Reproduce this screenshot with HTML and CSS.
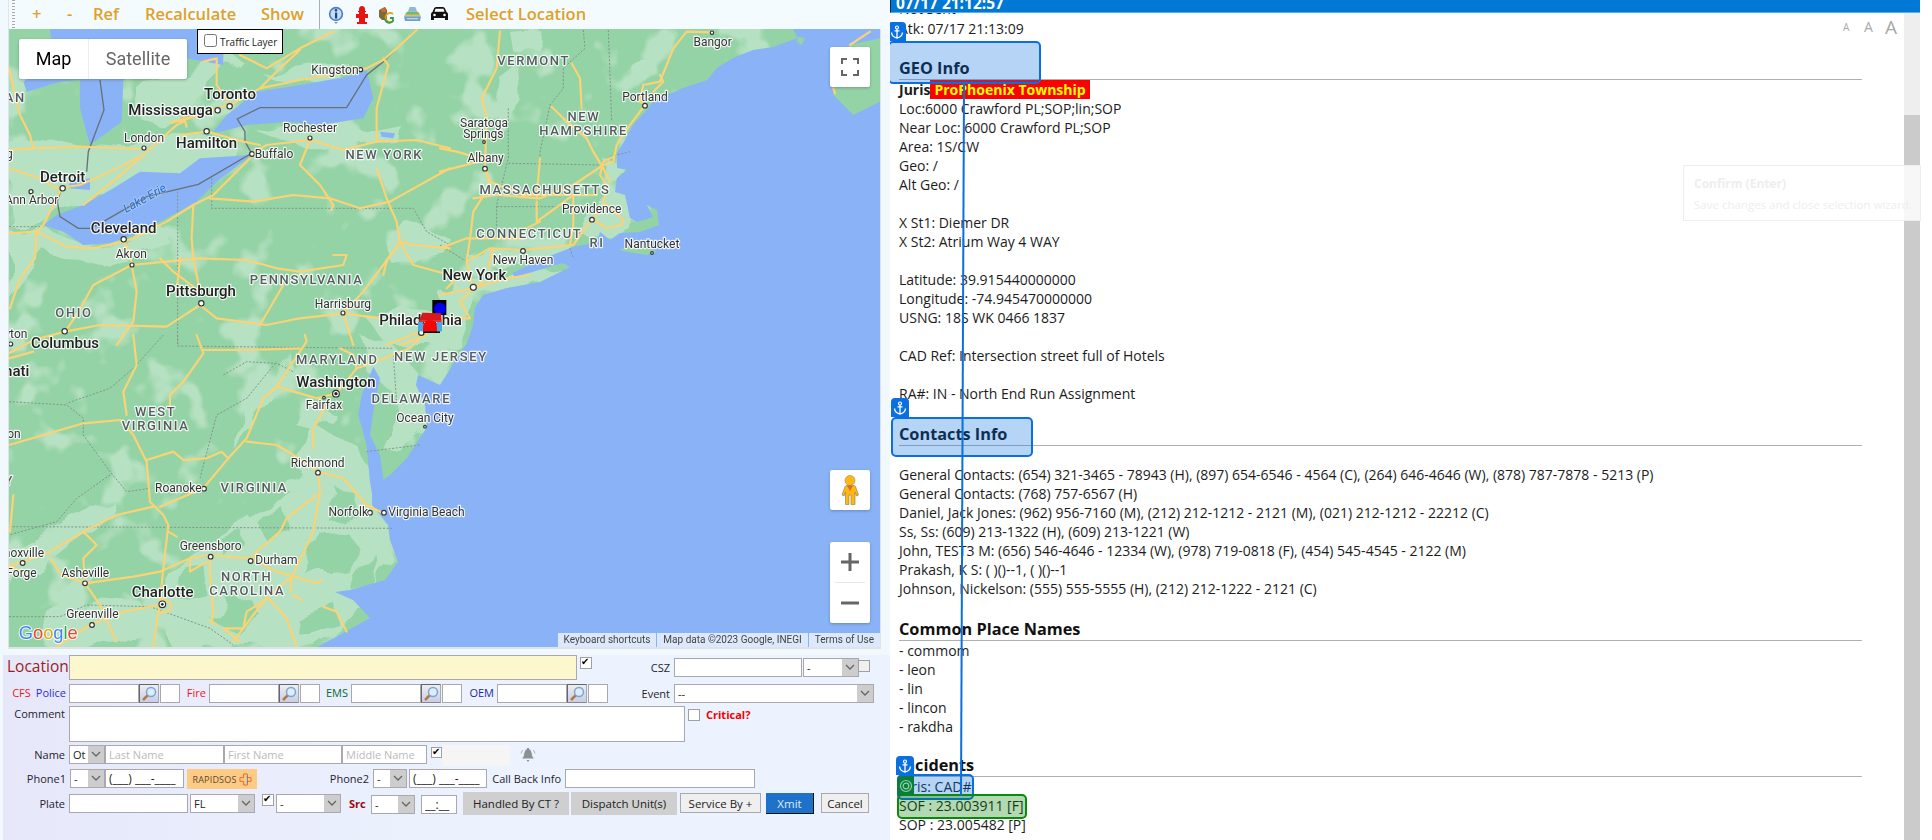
FILE: index.html
```html
<!DOCTYPE html>
<html lang="en">
<head>
<meta charset="utf-8">
<title>Call Entry</title>
<link rel="stylesheet" href="styles.css">
</head>
<body>
<svg class="defs" aria-hidden="true"><defs>
  <symbol id="anchor" viewBox="0 0 14 14"><circle cx="7" cy="2.500" r="1.500" fill="none" stroke="#fff" stroke-width="1.200"/><path d="M7 4v9M4.500 5.800h5M1.500 7.500c.3 3 2.500 5 5.500 5.500 3-.5 5.200-2.500 5.500-5.500" fill="none" stroke="#fff" stroke-width="1.300"/></symbol>
  <symbol id="glass" viewBox="0 0 16 16"><circle cx="10" cy="6" r="4.500" fill="#dcecf8" stroke="#7aa6d2" stroke-width="1.500"/><path d="M6.500 9.500L2 14" stroke="#b87a3a" stroke-width="2.500"/></symbol>
</defs></svg>
<div class="page">
  <section class="left">
    <nav class="toolbar">
      <span class="grip"></span>
      <a class="tl tl-plus">+</a><a class="tl tl-minus">-</a><a class="tl tl-ref">Ref</a><a class="tl tl-rec">Recalculate</a><a class="tl tl-show">Show</a>
      <span class="divider"></span>
      <svg class="ti ti-info" viewBox="0 0 16 18"><circle cx="8" cy="8" r="7.200" fill="#4a7fc4"/><circle cx="8" cy="8" r="5.500" fill="#c7dcf5"/><path d="M6 16l2 2 2-2z" fill="#7a9cc4"/><rect x="7" y="6.500" width="2.200" height="6" fill="#1d3f8a"/><circle cx="8" cy="4.300" r="1.300" fill="#1d3f8a"/></svg>
      <svg class="ti ti-hyd" viewBox="0 0 12 18"><path d="M6 0c2 0 3 1.500 3 3.500V5h1v1H9v2h3v4H9v4h2v2H1v-2h2v-4H0V8h3V6H2V5h1V3.500C3 1.500 4 0 6 0z" fill="#e81414"/></svg>
      <svg class="ti ti-g" viewBox="0 0 16 18"><path d="M0 4l6-3 2 3v10H3L0 11z" fill="#7d6a3c"/><path d="M2 3l4-2 1 5H3z" fill="#d8662a"/><path d="M14 8a4.500 4.500 0 1 0 0 7" fill="none" stroke="#e0a020" stroke-width="1.800"/><path d="M6 13a4.500 4.500 0 0 0 8 2v-3h-3" fill="none" stroke="#3a9a48" stroke-width="1.800"/></svg>
      <svg class="ti ti-road" viewBox="0 0 18 16"><path d="M6 0h6l2 5H4z" fill="#8fb8d8"/><path d="M3 5h12l3 5H0z" fill="#70b87a"/><path d="M1 8h16v2H1z" fill="#e0c050"/><path d="M0 10h18l-1 5H1z" fill="#6f9fcf"/><path d="M3 12.500h12" stroke="#dfe8f0"/></svg>
      <svg class="ti ti-car" viewBox="0 0 17 15"><path d="M3 1.500C3.500.5 4.500 0 5.500 0h6c1 0 2 .5 2.500 1.500L15.500 5c1 .5 1.500 1.500 1.500 2.500V13h-3v-2H3v2H0V7.500C0 6.500.5 5.500 1.500 5z" fill="#111"/><path d="M4.500 1.800h8l1 3h-10z" fill="#fff"/><circle cx="3.500" cy="8" r="1.300" fill="#fff"/><circle cx="13.500" cy="8" r="1.300" fill="#fff"/></svg>
      <a class="tl tl-sel">Select Location</a>
    </nav>

    <div class="map">
      <svg class="basemap" viewBox="9 29 871 618" preserveAspectRatio="none">
        <defs>
          <filter id="mott" x="0" y="0" width="100%" height="100%" color-interpolation-filters="sRGB"><feTurbulence type="fractalNoise" baseFrequency=".022" numOctaves="3" seed="7"/><feColorMatrix values="0 0 0 0 .714  0 0 0 0 .882  0 0 0 0 .761  9 0 0 0 -5.000"/></filter>
          <filter id="rough" x="-5%" y="-5%" width="110%" height="110%"><feTurbulence type="fractalNoise" baseFrequency=".03" numOctaves="2" seed="3" result="n"/><feDisplacementMap in="SourceGraphic" in2="n" scale="26"/></filter>
        </defs>
        <rect class="land" x="0" y="0" width="900" height="660"/>
        <rect class="mott" x="0" y="0" width="900" height="660"/>
        <!-- light terrain -->
        <g class="rough">
        <g transform="translate(0 25) scale(.3333)" class="lt">
          <path d="M27 370L150 340 280 370 400 380 520 330 620 330 720 370 640 470 540 450 420 440 250 540 180 560 130 600 27 600z"/>
          <path d="M27 620L130 610 280 670 400 640 480 600 520 660 400 700 300 720 140 680 60 780 27 830z"/>
          <path d="M400 180L520 160 600 120 640 60 720 100 620 200 560 240 480 300 420 280z"/>
          <path d="M780 140L960 110 1060 130 1000 170 880 180z"/>
          <path d="M770 320L940 300 1100 320 1200 300 1190 350 1000 370 850 350z"/>
          <path d="M1150 640L1230 600 1350 640 1350 700 1250 720 1160 700z"/>
          <path d="M1100 880L1200 850 1350 860 1350 960 1160 960z"/>
        </g>
        <g transform="translate(440 25) scale(.3333)" class="lt">
          <path d="M180 160L230 120 240 220 200 320 150 340 170 230z"/>
          <path d="M210 20L300 15 280 60 220 80z"/>
          <path d="M440 540L560 500 580 590 540 640 450 640 400 600z"/>
          <path d="M0 800L60 750 200 760 300 720 360 730 280 780 130 810 100 850 60 960 0 960z"/>
          <path d="M80 690L250 690 400 660 380 690 240 720 120 740z"/>
          <path d="M490 400L560 430 530 470 490 460z"/>
          <path d="M570 120L640 110 620 160 580 190z"/>
        </g>
        <g transform="translate(0 335) scale(.3333)" class="lt">
          <path d="M500 935L490 790 560 650 700 560 850 450 930 340 940 270 1090 350 1160 560 1190 680 1100 780 1030 880 950 935z"/>
          <path d="M700 340L780 170 880 60 850 150 780 250 730 320z"/>
          <path d="M1080 0L1180 30 1250 110 1300 200 1350 150 1350 280 1290 290 1210 350 1150 340 1200 230 1170 160 1100 110z"/>
          <path d="M900 200L1000 230 940 290 880 260z"/>
          <path d="M60 640L200 560 330 490 340 540 220 620 120 700 40 760z"/>
          <path d="M130 820L300 790 420 800 470 900 350 935 140 935z"/>
        </g>
        <g transform="translate(0 335) scale(.3333)" class="dk">
          <path d="M960 600L1040 590 1080 640 1000 720 920 720z"/>
          <path d="M770 560L870 540 880 600 800 620z"/>
          <path d="M650 600L720 580 730 620 660 650z"/>
          <path d="M680 780L760 800 800 860 720 900 640 860z"/>
          <path d="M880 840L1000 800 1020 870 900 900z"/>
          <path d="M560 480L640 500 600 560 520 570z"/>
          <path d="M1040 700L1150 680 1130 740 1050 760z"/>
          <path d="M720 480L810 440 880 480 830 530 740 540z"/>
          <path d="M560 700L610 690 620 780 540 800z"/>
          <path d="M1000 450L1060 470 1070 540 990 560z"/>
        </g>
        </g>
        <!-- water -->
        <path class="wt" d="M793 29L798 38 773 47 753 50 733 58 717 68 707 80 683 88 667 95 653 102 645 112 633 125 625 140 617 153 617 168 627 170 617 178 615 192 625 195 630 218 637 222 653 217 647 205 657 210 659 225 640 232 620 233 610 240 600 232 597 242 573 247 547 257 523 268 512 273 515 277 563 263 570 267 540 282 507 288 483 295 475 308 473 325 467 343 457 358 440 385 418 375 416 385 425 405 427 427 407 458 390 475 383 480 372 490 372 505 388 525 390 540 398 562 385 580 350 590 335 592 353 600 370 618 345 632 317 647H880V29z"/>
        <g transform="translate(0 335) scale(.3333)" class="wt">
          <path d="M1120 95L1085 180 1075 240 1100 330 1110 440 1120 500 1160 500 1150 430 1140 360 1110 300 1120 230 1140 130z"/>
        </g>
        <g transform="translate(0 25) scale(.3333)" class="wt">
          <path d="M755 390L650 470 590 530 500 580 400 630 330 655 250 660 190 620 130 600 170 570 250 540 340 490 420 440 540 445 600 400z"/>
          <path d="M640 320L680 270 770 200 900 180 1040 155 1100 135 1120 220 1090 280 960 300 860 290 740 300 660 320z"/>
          <path d="M150 12L590 12 590 80 670 80 670 120 560 100 370 165 365 290 270 360 240 250 240 165 180 170 80 200 70 170 160 100z"/>
          <path d="M210 470L270 460 270 495 205 490z"/>
          <path d="M1140 320L1185 325 1180 340 1145 335z"/>
        </g>
        <g transform="translate(440 25) scale(.3333)" class="land">
          <path d="M1320 40L1230 60 1180 170 1180 210 1240 270 1320 230z"/>
          <path d="M540 675L590 650 650 680 620 690 560 680z"/>
          <path d="M1075 35L1095 40 1085 60 1070 50z"/>
        </g>
        <!-- borders -->
        <g transform="translate(0 25) scale(.3333)">
          <path class="bd" d="M635 460V550H1240L1280 620 1350 660M533 500V960M27 605H130"/>
          <path class="in" d="M1250 15L1190 70 1150 110 1100 150 1040 248H780L712 282 735 320V350L755 385 595 478 440 515 310 590 272 610H235L180 575 172 530 185 490M260 440L265 380 312 255 300 165"/>
        </g>
        <g transform="translate(440 25) scale(.3333)">
          <path class="bd" d="M430 15L435 70 370 130V190L330 240 300 380V415M505 15L515 290M205 250V400L170 540V620M205 415L490 420 510 395 570 380M170 545H360M0 660L80 710M390 670L400 700"/>
        </g>
        <g transform="translate(0 335) scale(.3333)">
          <path class="bd" d="M533 0V33L880 37 1180 40M1180 60L1190 200M27 575L1180 580M27 200L200 210 250 250V300L330 410 380 470 450 460M490 0L400 100 330 160 200 205M670 120L740 80 830 85 880 110M1100 350L1260 330M600 430L650 240 740 190 830 80M27 845H180L260 810 450 815 630 880 700 930M330 420L230 490 170 560 27 600"/>
        </g>
        <!-- roads -->
        <g transform="translate(0 25) scale(.3333)" class="rd">
          <path d="M520 290L600 270 650 250 690 240 780 190 900 165 1000 150 1100 130 1150 105 1190 70 1250 15"/>
          <path d="M27 430L120 460 170 490 240 480 330 440 430 390 530 300 550 290M510 295L570 280M550 270L560 305"/>
          <path d="M27 375L100 370 240 365 420 372M100 370L90 330 60 270 27 130"/>
          <path d="M430 390L350 460 250 540M540 330L620 320 730 350 780 360"/>
          <path d="M610 110L650 100V180L690 240M720 90L800 130 900 70 1000 20M780 190L840 130 900 75"/>
          <path d="M755 385L800 360 930 345 1030 375 1130 350 1250 345 1350 370"/>
          <path d="M1130 350V250L1165 120 1150 100"/>
          <path d="M900 420L930 345M900 420L960 480 1000 540 995 555"/>
          <path d="M1130 430L1160 520 1190 590 1200 650 1160 710 1150 750"/>
          <path d="M755 395L640 510 580 540 500 590 400 640 370 650 280 670 200 665 110 620"/>
          <path d="M580 540L575 640 580 700 600 800M540 700L530 800"/>
          <path d="M630 520L760 530 880 510 990 520 1080 550 1170 530 1350 430"/>
          <path d="M27 625L110 620 105 700 60 760 30 850M110 620L130 600 180 500"/>
          <path d="M395 720L500 710 600 700 740 705 830 730 900 740 1030 720 1040 690 1000 690"/>
          <path d="M1140 880L1030 865 900 880 800 900 650 880 600 840 500 905 300 900 195 920 100 945 27 985"/>
          <path d="M395 720L390 680 370 650M395 720L280 780 230 870 195 920M395 720L410 800 400 890 350 960M480 700L520 740 600 800"/>
          <path d="M1030 865L1090 800 1150 720 1200 650 1240 720 1350 750M1030 865L1060 960"/>
          <path d="M1260 920L1160 960M1200 650L1240 660 1350 670M850 780L780 900"/>
        </g>
        <g transform="translate(440 25) scale(.3333)" class="rd">
          <path d="M815 22L740 20 700 70 680 120 660 170 610 180 600 230 615 240 570 300 530 360 520 410 490 420 400 480 300 520 170 510 100 520M660 150L670 170 640 200"/>
          <path d="M520 395L490 410 480 450 500 480 490 540 460 585 500 610 545 600 550 585 500 540"/>
          <path d="M180 20L170 130 125 220 140 270 135 430 150 480 100 560 90 640 80 710"/>
          <path d="M395 115L420 160 425 250M335 245L380 290 440 340 460 380 490 430 510 470"/>
          <path d="M0 440L135 405 50 380 0 370M135 430L150 470 250 510 400 510 470 510"/>
          <path d="M0 670L80 640H250M80 710L150 670 250 675 350 665 400 660 450 590"/>
          <path d="M290 530V590L360 540 400 510V600L390 660M300 400L290 520M300 590L200 640"/>
          <path d="M100 790L80 710M100 790L200 760 270 750M0 810L100 790 60 830 90 880M0 880H90M160 670L145 730M20 790L60 750"/>
          <path d="M1230 60L1290 20M1180 190L1185 205M100 790L130 770"/>
        </g>
        <g transform="translate(0 335) scale(.3333)" class="rd">
          <path d="M27 330L130 300 250 265 360 255 400 300 440 380 450 500 490 540 505 570 490 700 480 800 460 935"/>
          <path d="M440 375L520 350 550 375 620 370 665 350 685 370M505 590L530 605"/>
          <path d="M460 515L350 540 250 590 150 650 70 680 27 690"/>
          <path d="M480 515L610 460 685 370 740 310 790 190 830 155 880 80 920 20 915 0"/>
          <path d="M740 320L830 330 880 360 955 410 960 470 940 590 880 720 800 790 760 840 700 920"/>
          <path d="M955 410L1030 430 1100 510 1150 535"/>
          <path d="M950 480L860 550 840 590 770 650 750 680"/>
          <path d="M27 690L70 715M255 745L400 725 480 710 570 670 630 660 750 670 830 710 950 745 965 735"/>
          <path d="M255 745L185 720 150 670M255 745L250 670 290 630 250 590"/>
          <path d="M630 660V720L640 830 635 860"/>
          <path d="M255 745L300 810 350 920M480 810L370 830 270 870 170 935M480 790C530 800 520 840 480 830"/>
          <path d="M805 790L860 850 890 935M805 790L740 830 730 880 670 880 720 920M630 860L650 870"/>
          <path d="M570 670V710L620 680M880 780L905 795M875 730L870 770"/>
          <path d="M830 155L950 190 1010 175 1070 100 1100 90 1230 40 1260 10"/>
          <path d="M510 180L550 140 610 55 590 0M510 180V230M610 45H740L900 40"/>
          <path d="M400 0L410 90 370 170 380 240M27 70L100 50M40 480L30 590"/>
          <path d="M940 340V280L980 210M970 815L1010 830 1040 890M1070 100L1060 60 1020 40M1200 30L1280 0"/>
        </g>
        <!-- place dots -->
        <g transform="translate(0 25) scale(.3333)" class="dot">
          <circle cx="689" cy="244" r="8"/><circle cx="653" cy="256" r="8"/><circle cx="620" cy="319" r="8"/><circle cx="432" cy="369" r="6"/><circle cx="756" cy="387" r="7"/><circle cx="930" cy="339" r="6"/><circle cx="1082" cy="134" r="6"/><circle cx="188" cy="490" r="8"/><circle cx="93" cy="500" r="6"/><circle cx="371" cy="643" r="8"/><circle cx="396" cy="720" r="6"/><circle cx="604" cy="835" r="8"/><circle cx="1029" cy="864" r="6"/><circle cx="194" cy="919" r="8"/><circle cx="1264" cy="923" r="8"/>
        </g>
        <g transform="translate(440 25) scale(.3333)" class="dot">
          <circle cx="816" cy="23" r="5"/><circle cx="615" cy="242" r="7"/><circle cx="132" cy="351" r="4"/><circle cx="135" cy="431" r="7"/><circle cx="456" cy="584" r="7"/><circle cx="636" cy="684" r="4"/><circle cx="249" cy="678" r="7"/><circle cx="100" cy="787" r="9"/>
        </g>
        <g transform="translate(0 335) scale(.3333)" class="dot">
          <circle cx="1008" cy="176" r="10"/><circle cx="972" cy="188" r="4"/><circle cx="1275" cy="275" r="4"/><circle cx="954" cy="413" r="7"/><circle cx="612" cy="461" r="7"/><circle cx="1110" cy="533" r="7"/><circle cx="1152" cy="533" r="7"/><circle cx="632" cy="665" r="7"/><circle cx="752" cy="678" r="7"/><circle cx="68" cy="684" r="7"/><circle cx="255" cy="745" r="7"/><circle cx="487" cy="808" r="10"/><circle cx="276" cy="870" r="7"/><circle cx="32" cy="27" r="6"/>
        </g>
        <g transform="translate(0 335) scale(.3333)"><circle class="cap" cx="1008" cy="176" r="5"/><circle class="cap" cx="487" cy="808" r="4"/></g>
        <!-- labels -->
        <g transform="translate(0 25) scale(.3333)" class="lbl">
          <text class="cb" x="690" y="222">Toronto</text><text class="cb" x="512" y="270">Mississauga</text><text class="cb" x="620" y="370">Hamilton</text><text class="cb" x="188" y="472">Detroit</text><text class="cb" x="371" y="624">Cleveland</text><text class="cb" x="603" y="814">Pittsburgh</text><text class="cb" x="1262" y="900">Philadelphia</text>
          <text class="cs" x="432" y="352">London</text><text class="cs" x="930" y="320">Rochester</text><text class="cs" x="822" y="398">Buffalo</text><text class="cs" x="1005" y="146">Kingston</text><text class="cs" x="95" y="538">Ann Arbor</text><text class="cs" x="394" y="700">Akron</text><text class="cs" x="1029" y="848">Harrisburg</text><text class="cs ae" x="82" y="938">Dayton</text><text class="cs ae" x="38" y="400">Lansing</text>
          <text class="st" x="1153" y="402">NEW YORK</text><text class="st" x="920" y="778">PENNSYLVANIA</text><text class="st" x="222" y="876">OHIO</text><text class="st ae" x="78" y="230">MICHIGAN</text>
          <text class="lk" transform="translate(440 530) rotate(-29)" x="0" y="0">Lake Erie</text>
        </g>
        <g transform="translate(440 25) scale(.3333)" class="lbl">
          <text class="cb" x="103" y="765">New York</text>
          <text class="cs" x="818" y="62">Bangor</text><text class="cs" x="615" y="227">Portland</text><text class="cs" x="132" y="305">Saratoga</text><text class="cs" x="130" y="339">Springs</text><text class="cs" x="137" y="412">Albany</text><text class="cs" x="455" y="565">Providence</text><text class="cs" x="636" y="668">Nantucket</text><text class="cs" x="249" y="718">New Haven</text>
          <text class="st" x="281" y="120">VERMONT</text><text class="st" x="432" y="287">NEW</text><text class="st" x="431" y="329">HAMPSHIRE</text><text class="st" x="315" y="507">MASSACHUSETTS</text><text class="st" x="268" y="639">CONNECTICUT</text><text class="st" x="471" y="665">RI</text>
        </g>
        <g transform="translate(0 335) scale(.3333)" class="lbl">
          <text class="cb" x="195" y="40">Columbus</text><text class="cb ae" x="88" y="122">Cincinnati</text><text class="cb" x="1008" y="156">Washington</text><text class="cb" x="488" y="786">Charlotte</text>
          <text class="cs" x="972" y="222">Fairfax</text><text class="cs" x="1275" y="262">Ocean City</text><text class="cs" x="953" y="397">Richmond</text><text class="cs" x="535" y="472">Roanoke</text><text class="cs" x="1045" y="544">Norfolk</text><text class="cs as" x="1165" y="544">Virginia Beach</text><text class="cs" x="632" y="646">Greensboro</text><text class="cs as" x="766" y="688">Durham</text><text class="cs" x="256" y="726">Asheville</text><text class="cs" x="277" y="850">Greenville</text><text class="cs ae" x="132" y="665">Knoxville</text><text class="cs ae" x="110" y="725">Pigeon Forge</text><text class="cs ae" x="62" y="310">Lexington</text>
          <text class="st" x="1012" y="86">MARYLAND</text><text class="st" x="1323" y="78">NEW JERSEY</text><text class="st" x="763" y="471">VIRGINIA</text><text class="st" x="467" y="243">WEST</text><text class="st" x="467" y="285">VIRGINIA</text><text class="st" x="1234" y="204">DELAWARE</text><text class="st" x="740" y="738">NORTH</text><text class="st" x="742" y="780">CAROLINA</text><text class="st ae" x="42" y="450">KENTUCKY</text>
          <text class="gl" x="56" y="911"><tspan class="gb">G</tspan><tspan class="gr">o</tspan><tspan class="gy">o</tspan><tspan class="gb">g</tspan><tspan class="gg">l</tspan><tspan class="gr">e</tspan></text>
        </g>
        <!-- incident markers -->
        <g transform="translate(380 270) scale(.3333)">
          <rect x="157" y="90" width="42" height="45" fill="#000"/><circle cx="180" cy="116" r="18" fill="#0000f0"/>
          <path d="M127 128L183 130 185 150 118 150z" fill="#d8191c"/><rect x="118" y="150" width="67" height="6" fill="#e03030"/>
          <rect x="114" y="156" width="16" height="28" fill="#4aa8e8"/><rect x="170" y="156" width="16" height="28" fill="#4aa8e8"/>
          <path d="M150 150a20 22 0 0 1 21 24v12h-42v-12a20 22 0 0 1 21-24z" fill="#f40606"/><rect x="130" y="184" width="50" height="5" fill="#111"/>
        </g>
      </svg>

      <div class="mtype"><span class="mt-map">Map</span><span class="mt-sat">Satellite</span></div>
      <label class="traffic"><input type="checkbox" class="tcb"><span>Traffic Layer</span></label>
      <button class="mbtn fs" aria-label="Fullscreen"><svg viewBox="0 0 18 18"><path d="M0 6V0h6v2H2v4zM12 0h6v6h-2V2h-4zM0 12h2v4h4v2H0zM16 12h2v6h-6v-2h4z" fill="#666"/></svg></button>
      <button class="mbtn peg" aria-label="Street View"><svg viewBox="0 0 18 30"><circle cx="9" cy="5.500" r="5" fill="#fdb813" stroke="#a08a50" stroke-width=".6"/><path d="M5 10.500h8l1.500 1 3 8.500-2 1-1.500-4v12.500H10V20H8v9.500H4.500V17l-1.500 4-2-1 3-8.500z" fill="#fdb813" stroke="#8a7a50" stroke-width=".6"/><path d="M6 10.800h6L9 16z" fill="#e06a28"/></svg></button>
      <div class="mzoom">
        <button class="mz" aria-label="Zoom in"><svg viewBox="0 0 18 18"><path d="M7.500 0h3v7.500H18v3h-7.500V18h-3v-7.500H0v-3h7.500z" fill="#666"/></svg></button>
        <i class="mz-sep"></i>
        <button class="mz" aria-label="Zoom out"><svg viewBox="0 0 18 18"><path d="M0 7.500h18v3H0z" fill="#666"/></svg></button>
      </div>
      <div class="attr"><span>Keyboard shortcuts</span><span>Map data ©2023 Google, INEGI</span><span>Terms of Use</span></div>
    </div>

    <form class="form">
      <div class="row r1">
        <label class="l-loc">Location</label>
        <input class="f loc" type="text">
        <input class="ck c-loc" type="checkbox" checked>
        <label class="lb w82 d3">CSZ</label>
        <input class="f w128 d3" type="text">
        <select class="sel w56 d3 ml1"><option>-</option></select>
        <input class="ck c-csz" type="checkbox">
      </div>
      <div class="row r2">
        <label class="l2 w66"><b class="red">CFS</b><b class="blue ml5">Police</b></label>
        <input class="f w70" type="text"><button type="button" class="srch"><svg><use href="#glass"/></svg></button><input class="f w20 ml1" type="text">
        <label class="l2 w29"><b class="red">Fire</b></label>
        <input class="f w70" type="text"><button type="button" class="srch"><svg><use href="#glass"/></svg></button><input class="f w20 ml1" type="text">
        <label class="l2 w31"><b class="grn">EMS</b></label>
        <input class="f w70" type="text"><button type="button" class="srch"><svg><use href="#glass"/></svg></button><input class="f w20 ml1" type="text">
        <label class="l2 w35"><b class="navy">OEM</b></label>
        <input class="f w70" type="text"><button type="button" class="srch"><svg><use href="#glass"/></svg></button><input class="f w20 ml1" type="text">
        <label class="lb w66">Event</label>
        <select class="sel w200"><option>--</option></select>
      </div>
      <div class="row r3">
        <label class="lb w66 top">Comment</label>
        <textarea class="f cmt"></textarea>
        <input class="ck c-crit" type="checkbox">
        <label class="crit">Critical?</label>
      </div>
      <div class="row r4">
        <label class="lb w66">Name</label>
        <select class="sel w36"><option>Ot</option></select>
        <input class="f w119" type="text" placeholder="Last Name"><input class="f w118" type="text" placeholder="First Name"><input class="f w85" type="text" placeholder="Middle Name">
        <input class="ck c-name" type="checkbox" checked>
        <span class="blank"></span>
        <svg class="bell" viewBox="0 0 16 16"><path d="M8 1c.7 0 1.200.5 1.200 1.200C11 3 11.500 5 12 8c.2 1.500 1 2.500 2 3.500H2C3 10.500 3.800 9.500 4 8c.5-3 1-5 2.800-5.800C6.800 1.500 7.300 1 8 1zM6.500 13h3L8 15z" fill="#8d9092"/><path d="M2.500 3L1 6.500M13.500 3L15 6.500" stroke="#b0b3b5"/></svg>
      </div>
      <div class="row r5">
        <label class="lb w67">Phone1</label>
        <select class="sel w35"><option>-</option></select>
        <input class="f w79 ph" type="text" value="(___) ___-____">
        <span class="rapid">RAPIDSOS<svg viewBox="0 0 14 14"><path d="M5 1h4v4h4v4H9v4H5V9H1V5h4z" fill="none" stroke="#e8622a"/><path d="M9 3v8" stroke="#3a8ac8"/></svg></span>
        <label class="lb w116">Phone2</label>
        <select class="sel w34"><option>-</option></select>
        <input class="f w78 ml2 ph" type="text" value="(___) ___-____">
        <label class="lb w78">Call Back Info</label>
        <input class="f w190" type="text">
      </div>
      <div class="row r6">
        <label class="lb w66 d2">Plate</label>
        <input class="f w119 d2" type="text">
        <select class="sel w65 d2 ml2"><option>FL</option></select>
        <input class="ck c-pl" type="checkbox" checked>
        <select class="sel w65 d2 ml2"><option>-</option></select>
        <label class="src">Src</label>
        <select class="sel w44 d3"><option>-</option></select>
        <input class="f w36 d3 ml6 ph" type="text" value="__:__">
        <button type="button" class="gb1">Handled By CT ?</button>
        <button type="button" class="gb1 ml2">Dispatch Unit(s)</button>
        <button type="button" class="gb2 w81">Service By +</button>
        <button type="button" class="xmit">Xmit</button>
        <button type="button" class="gb2 w48 ml7">Cancel</button>
      </div>
    </form>
  </section>

  <section class="right">
    <header class="rhead">07/17 21:12:57</header>
    <div class="fontsizes"><span class="a1">A</span><span class="a2">A</span><span class="a3">A</span></div>
    <div class="doc">
      <div class="prev">Not Sent</div>
      <div>Atk: 07/17 21:13:09</div>
      <h3 class="h-geo">GEO Info</h3>
      <div><b>Juris</b><b class="hot">ProPhoenix Township</b></div>
      <div>Loc:6000 Crawford PL;SOP;lin;SOP</div>
      <div>Near Loc: 6000 Crawford PL;SOP</div>
      <div>Area: 1S/CW</div>
      <div>Geo: /</div>
      <div>Alt Geo: /</div>
      <br>
      <div>X St1: Diemer DR</div>
      <div>X St2: Atrium Way 4 WAY</div>
      <br>
      <div>Latitude: 39.915440000000</div>
      <div>Longitude: -74.945470000000</div>
      <div>USNG: 18S WK 0466 1837</div>
      <br>
      <div>CAD Ref: Intersection street full of Hotels</div>
      <br>
      <div>RA#: IN - North End Run Assignment</div>
      <h3 class="h-con">Contacts Info</h3>
      <br>
      <div>General Contacts: (654) 321-3465 - 78943 (H), (897) 654-6546 - 4564 (C), (264) 646-4646 (W), (878) 787-7878 - 5213 (P)</div>
      <div>General Contacts: (768) 757-6567 (H)</div>
      <div>Daniel, Jack Jones: (962) 956-7160 (M), (212) 212-1212 - 2121 (M), (021) 212-1212 - 22212 (C)</div>
      <div>Ss, Ss: (609) 213-1322 (H), (609) 213-1221 (W)</div>
      <div>John, TEST3 M: (656) 546-4646 - 12334 (W), (978) 719-0818 (F), (454) 545-4545 - 2122 (M)</div>
      <div>Prakash, K S: ( )()--1, ( )()--1</div>
      <div>Johnson, Nickelson: (555) 555-5555 (H), (212) 212-1222 - 2121 (C)</div>
      <h3 class="h-com">Common Place Names</h3>
      <div>- commom</div>
      <div>- leon</div>
      <div>- lin</div>
      <div>- lincon</div>
      <div>- rakdha</div>
      <h3 class="h-inc">Incidents</h3>
      <div>Juris: CAD#</div>
      <div>SOF : 23.003911 [F]</div>
      <div>SOP : 23.005482 [P]</div>
    </div>
    <div class="sbar"><span class="sthumb"></span></div>
    <div class="tip"><strong>Confirm (Enter)</strong><span>Save changes and close selection wizard.</span></div>
    <span class="abox b-geo"></span><span class="atab t-geo"><svg><use href="#anchor"/></svg></span>
    <span class="abox b-con"></span><span class="atab t-con"><svg><use href="#anchor"/></svg></span>
    <span class="abox b-inc"></span><span class="atab t-inc"><svg><use href="#anchor"/></svg></span>
    <span class="gbox"></span>
    <span class="gtab"><svg viewBox="0 0 14 14"><circle cx="7" cy="7" r="5.500" fill="none" stroke="#8fd0a8" stroke-width="1.200"/><circle cx="7" cy="7" r="2.800" fill="none" stroke="#8fd0a8" stroke-width="1.200"/></svg></span>
    <svg class="link" viewBox="0 0 100 720"><path d="M74 0L71 712" fill="none" stroke="#0a6fe0" stroke-width="2"/></svg>
  </section>
</div>
</body>
</html>
```
FILE: styles.css
```css
*{box-sizing:border-box}
html,body{margin:0;padding:0;height:840px;width:1932px;overflow:hidden;background:#fff}
body{font-family:"Open Sans","Liberation Sans",sans-serif;color:#1a1a1a}
.defs{position:absolute;width:0;height:0}
.page{display:flex;width:1932px;height:840px}
.left{width:890px;height:840px;flex:none;background:#f1f8fe;display:flex;flex-direction:column}

.toolbar{height:29px;display:flex;align-items:center;position:relative;background:#f3fbff;border-left:1px solid #e0e4ea;margin-left:8px;flex:none}
.grip{width:3px;height:29px;margin-left:3px;background:repeating-linear-gradient(#aaa 0 1px,transparent 1px 3px)}
.tl{font-weight:600;font-size:16.500px;color:#dfa128;white-space:nowrap;line-height:27px;height:29px}
.tl-plus{margin-left:17px;width:35px}
.tl-minus{width:26px}
.tl-ref{width:52px}
.tl-rec{width:116px}
.tl-show{width:58px}
.divider{width:1px;height:29px;background:#a9adb3}
.ti{flex:none;display:block}
.ti-info{width:16px;height:18px;margin-left:8px}
.ti-hyd{width:12px;height:18px;margin-left:12px}
.ti-g{width:16px;height:18px;margin-left:11px}
.ti-road{width:17px;height:15px;margin-left:9px}
.ti-car{width:17px;height:15px;margin-left:10px}
.tl-sel{margin-left:18px}

.map{position:relative;margin-left:9px;width:871px;height:618px;flex:none;overflow:hidden;box-shadow:0 1px 0 1px #dfe2e6}
.basemap{display:block;width:871px;height:618px}
.land{fill:#94d3a5}
.mott{filter:url(#mott)}
.rough{filter:url(#rough)}
.lt{fill:#b6e1c2}
.dk{fill:#94d3a5}
.wt{fill:#89b3f6}
.bd{fill:none;stroke:#85938c;stroke-width:3;stroke-dasharray:6 5}
.in{fill:none;stroke:#6a7078;stroke-width:4}
.rd{fill:none;stroke:#fbd375;stroke-width:6.500;stroke-linejoin:round;stroke-linecap:round}
.dot{fill:#fff;stroke:#333;stroke-width:3.500}
.cap{fill:#222}
.lbl text{text-anchor:middle;font-family:Roboto,"Liberation Sans",sans-serif;paint-order:stroke;stroke:#fff;stroke-opacity:.85;stroke-width:7px;stroke-linejoin:round}
.lbl .ae{text-anchor:end}
.lbl .as{text-anchor:start}
.cb{font-size:45px;font-weight:500;fill:#222}
.cs{font-size:36px;fill:#333}
.st{font-size:39px;font-weight:500;letter-spacing:5px;fill:#555c60}
.lbl .lk{font-size:36px;fill:#2f6fc4;stroke-opacity:.2;font-style:italic}
.lbl .gl{text-anchor:start;font-family:"Liberation Sans",sans-serif;font-size:55px;stroke-width:6px}
.gb{fill:#4285f4}.gr{fill:#ea4335}.gy{fill:#e0a810}.gg{fill:#34a853}

.mtype{position:absolute;left:10px;top:10px;height:40px;width:168px;display:flex;background:#fff;border-radius:2px;box-shadow:0 1px 3px rgba(0,0,0,.25);font-family:Roboto,"Liberation Sans",sans-serif;font-size:18px;line-height:40px;text-align:center}
.mt-map{width:70px;color:#000;border-right:1px solid #eee}
.mt-sat{flex:1;color:#666}
.traffic{position:absolute;left:188px;top:0;width:86px;height:25px;background:#fff;border:1px solid #000;display:flex;align-items:center;font-size:10px;font-family:"Open Sans",sans-serif;color:#222}
.tcb{width:13px;height:13px;margin:0 3px 2px 6px}
.mbtn{position:absolute;left:821px;width:40px;height:40px;background:#fff;border:0;border-radius:2px;padding:0;display:flex;align-items:center;justify-content:center;box-shadow:0 1px 3px rgba(0,0,0,.25)}
.fs{top:18px}
.fs svg{width:18px;height:18px}
.peg{top:441px}
.peg svg{width:18px;height:30px}
.mzoom{position:absolute;left:821px;top:513px;width:40px;height:81px;background:#fff;border-radius:2px;box-shadow:0 1px 3px rgba(0,0,0,.25);display:flex;flex-direction:column;align-items:center}
.mz{border:0;background:none;width:40px;height:40px;padding:0;display:flex;align-items:center;justify-content:center}
.mz svg{width:18px;height:18px}
.mz-sep{display:block;width:30px;height:1px;background:#e6e6e6;flex:none}
.attr{position:absolute;right:0;bottom:0;height:14px;display:flex;font-family:Roboto,"Liberation Sans",sans-serif;font-size:10px;line-height:14px;color:#444}
.attr span{background:rgba(255,255,255,.7);padding:0 6px;margin-left:1px}

.form{margin:8px 0 0 3px;width:887px;flex:1;display:grid;grid-template-rows:29px 22px 39px 24px 23px 1fr;background:linear-gradient(90deg,#e6e8fa,#edf3fe 60%);font-size:11px;color:#1f2430}
.row{display:flex;align-items:flex-start;white-space:nowrap}
.f{height:19px;border:1px solid #a8a8ae;background:#fff;padding:0 3px;font:11px "Open Sans",sans-serif;color:#222;margin:0;border-radius:0;outline:0;flex:none;resize:none}
.f::placeholder{color:#bbb}
.sel{height:19px;flex:none;appearance:none;-webkit-appearance:none;border:1px solid #a8a8ae;border-radius:0;padding:0 0 0 3px;margin:0;font:11px "Open Sans",sans-serif;color:#222;background:#fff url("data:image/svg+xml,%3Csvg xmlns='http://www.w3.org/2000/svg' width='16' height='17'%3E%3Crect width='16' height='17' fill='%23cdcdcd'/%3E%3Cpath d='M4 6l4 4 4-4' fill='none' stroke='%23666' stroke-width='1.300'/%3E%3C/svg%3E") no-repeat right center}
.ph{font-size:12px}
.lb{text-align:right;padding-right:4px;line-height:19px;flex:none}
.lb.top{line-height:16px}
.l-loc{width:66px;padding-left:4px;font-size:15.500px;line-height:22px;color:#9c1c1c;flex:none}
.l2{line-height:17px;flex:none;text-align:right;padding-right:3px}
.l2 b{font-weight:400;display:inline-block}
.red{color:#f01818}.blue{color:#2b2be0}.grn{color:#0b6b2b}.navy{color:#1b2a9a}
.loc{width:508px;height:25px;background:#fdf7cd}
.cmt{width:616px;height:36px}
.w20{width:20px}.w36{width:36px}.w34{width:34px}.w35{width:35px}.w44{width:44px}.w53{width:53px}.w56{width:56px}.w65{width:65px}.w70{width:70px}.w78{width:78px}.w79{width:79px}.w81{width:81px}.w85{width:85px}.w118{width:118px}.w119{width:119px}.w128{width:128px}.w190{width:190px}.w200{width:200px}.w48{width:48px}
.w29{width:29px}.w31{width:31px}.w66{width:66px}.w67{width:67px}.w82{width:82px}.w116{width:116px}
.ml1{margin-left:1px}.ml2{margin-left:2px}.ml5{margin-left:5px}.ml6{margin-left:6px}.ml7{margin-left:7px}
.d2{margin-top:2px}.d3{margin-top:3px}
.ck{appearance:none;-webkit-appearance:none;width:12px;height:12px;margin:0;flex:none;background:#fff;border:1px solid #a0a0a0;position:relative}
.ck:checked::before{content:"✔";position:absolute;left:0;top:-2px;font-size:10px;line-height:12px;color:#000;font-family:"DejaVu Sans",sans-serif}
.c-loc{margin:2px 0 0 3px}
.c-csz{margin:5px 0 0 -1px;background:#f0f0f0}
.c-crit{margin:3px 0 0 3px}
.c-name{margin:2px 0 0 4px;width:11px;height:11px}
.c-pl{margin:2px 0 0 7px}
.crit{color:#f40000;font-weight:700;font-size:11px;margin:1px 0 0 6px}
.srch{width:20px;height:19px;padding:1px;margin:0;border:1px solid #666;border-right-color:#aaa;border-bottom-color:#888;background:linear-gradient(#eee,#c8cdea);display:flex;flex:none}
.srch svg{width:16px;height:16px}
.blank{width:68px;height:21px;background:#f5f5f5;flex:none}
.bell{width:16px;height:16px;margin:2px 0 0 10px;flex:none}
.rapid{width:70px;height:20px;margin-left:3px;background:#fecb85;color:#5a4a30;font-size:9px;letter-spacing:.2px;display:flex;align-items:center;justify-content:center;gap:2px;flex:none}
.rapid svg{width:13px;height:13px}
.src{width:22px;color:#9c0a0a;font-weight:700;margin:2px 0 0 8px;text-align:left;line-height:19px;flex:none}
.gb1{width:106px;height:23px;background:#cfcfcf;border:0;padding:0;font:11.500px "Open Sans",sans-serif;color:#222;margin:0 0 0 6px;flex:none}
.gb1.ml2{margin-left:2px}
.gb2{height:20px;margin:1px 0 0 3px;background:#efefef;border:1px solid #aaa;padding:0;font:11.500px "Open Sans",sans-serif;color:#222;flex:none}
.xmit{width:48px;height:21px;margin:1px 0 0 5px;background:#1f72c9;border:0;border-right:1px solid #111;border-bottom:1px solid #111;padding:0;color:#dfeaf8;font:11.500px "Open Sans",sans-serif;flex:none}
.gb2.ml7{margin-left:7px}

.right{position:relative;width:1042px;height:840px;flex:none;overflow:hidden}
.rhead{position:absolute;left:0;top:0;right:12px;height:13px;z-index:3;background:#0078d4;border-left:1px solid #1a2a40;border-bottom:1px solid #5aaef0;padding-left:5px;color:#fff;font-weight:700;font-size:15.500px;line-height:6px;overflow:hidden}
.doc{padding-left:9px;font-size:14px;line-height:19px;width:972px;white-space:nowrap;color:#1c1c1c}
.prev{height:19px;line-height:17px}
.doc h3{margin:0;font-size:16.300px;line-height:22px;height:23px;font-weight:700;border-bottom:1px solid #b0b0b0;color:#111}
.doc .h-geo{margin-top:19px}
.doc .h-con{margin-top:20px}
.doc .h-com{margin-top:20px}
.doc .h-inc{margin-top:18px}
.hot{background:#f00;color:#ff0;padding:0 4px;display:inline-block;line-height:19px}
.fontsizes{position:absolute;left:953px;top:16px;width:57px;height:20px;color:#a9a9a9;display:flex;align-items:flex-end;line-height:18px;z-index:1}
.a1{font-size:10px;width:21px}
.a2{font-size:14px;width:21px}
.a3{font-size:19px}
.sbar{position:absolute;left:1014px;top:12px;width:16px;height:828px;background:#eee}
.sthumb{display:block;margin-top:103px;height:725px;background:#cbcbcb}
.tip{position:absolute;left:793px;top:165px;width:238px;height:56px;border:1px solid #eee;background:rgba(255,255,255,.85);padding:9px 10px;font-size:11.500px;color:#efeded;display:flex;flex-direction:column;gap:3px;z-index:2;white-space:nowrap}
.tip span{line-height:18px}
.tip strong{line-height:18px;font-size:12px}
.abox{position:absolute;border:2px solid #0a6fe0;background:rgba(10,111,224,.3);border-radius:5px;z-index:4}
.b-geo{left:-2px;top:41px;width:153px;height:43px}
.b-con{left:1px;top:417px;width:142px;height:40px}
.b-inc{left:7px;top:774px;width:77px;height:26px}
.atab{position:absolute;width:18px;height:19px;background:#0a6fe0;border-radius:4px 4px 0 0;z-index:5;display:flex;align-items:center;justify-content:center}
.atab svg{width:14px;height:14px}
.t-geo{left:-2px;top:22px}
.t-con{left:1px;top:398px}
.t-inc{left:6px;top:756px}
.gbox{position:absolute;left:7px;top:794px;width:130px;height:25px;border:2px solid #0a8a0a;background:rgba(0,128,0,.3);border-radius:5px;z-index:4}
.gtab{position:absolute;left:7px;top:776px;width:17px;height:19px;background:#0a7d3c;z-index:5;display:flex;align-items:center;justify-content:center;border-radius:4px 0 0 0}
.gtab svg{width:14px;height:14px}
.link{position:absolute;left:0;top:83px;width:100px;height:720px;z-index:6;pointer-events:none}
```
